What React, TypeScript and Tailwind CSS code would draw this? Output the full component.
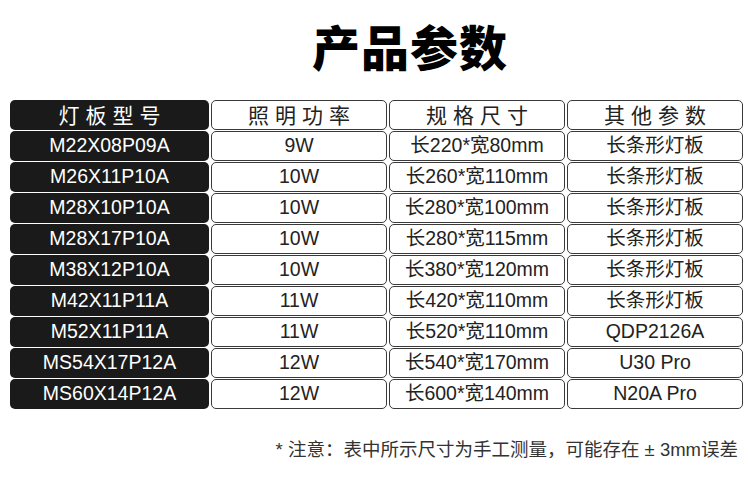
const rows = [
  ["M22X08P09A", "9W", "长220*宽80mm", "长条形灯板"],
  ["M26X11P10A", "10W", "长260*宽110mm", "长条形灯板"],
  ["M28X10P10A", "10W", "长280*宽100mm", "长条形灯板"],
  ["M28X17P10A", "10W", "长280*宽115mm", "长条形灯板"],
  ["M38X12P10A", "10W", "长380*宽120mm", "长条形灯板"],
  ["M42X11P11A", "11W", "长420*宽110mm", "长条形灯板"],
  ["M52X11P11A", "11W", "长520*宽110mm", "QDP2126A"],
  ["MS54X17P12A", "12W", "长540*宽170mm", "U30 Pro"],
  ["MS60X14P12A", "12W", "长600*宽140mm", "N20A Pro"],
];

const headers = ["灯板型号", "照明功率", "规格尺寸", "其他参数"];

const font = "font-['Liberation_Sans','Noto_Sans_CJK_SC',sans-serif]";

export default function App() {
  return (
    <div className={`w-[750px] h-[490px] bg-white overflow-hidden ${font}`}>
      {/* Title */}
      <h1 className="pt-[17px] pl-[70px] text-center text-[48px] leading-[56px] font-black text-black font-['Noto_Sans_CJK_SC',sans-serif] tracking-[1px]">
        产品参数
      </h1>

      {/* Table */}
      <div className="mt-[27px] ml-[10px] grid grid-cols-[199px_176px_176px_176px] gap-x-[2px] gap-y-[1px]">
        {headers.map((h, i) => (
          <div
            key={h}
            className={`h-[30px] rounded-[5px] flex items-center justify-center text-[21px] tracking-[6px] pl-[6px] font-['Noto_Sans_CJK_SC',sans-serif] ${
              i === 0 ? "bg-[#1a1a1a] text-white" : "border border-[#3a3a3a] text-[#222]"
            }`}
          >
            {h}
          </div>
        ))}
        {rows.map((r) =>
          r.map((c, i) => (
            <div
              key={r[0] + i}
              className={`h-[30px] rounded-[5px] flex items-center justify-center text-[19.5px] ${
                i === 0 ? "bg-[#1a1a1a] text-white" : "border border-[#3a3a3a] text-[#222]"
              }`}
            >
              {c}
            </div>
          ))
        )}
      </div>

      {/* Note */}
      <p className="mt-[27px] pr-[12px] text-right text-[18.5px] text-[#333]">
        * 注意：表中所示尺寸为手工测量，可能存在 ± 3mm误差
      </p>
    </div>
  );
}
